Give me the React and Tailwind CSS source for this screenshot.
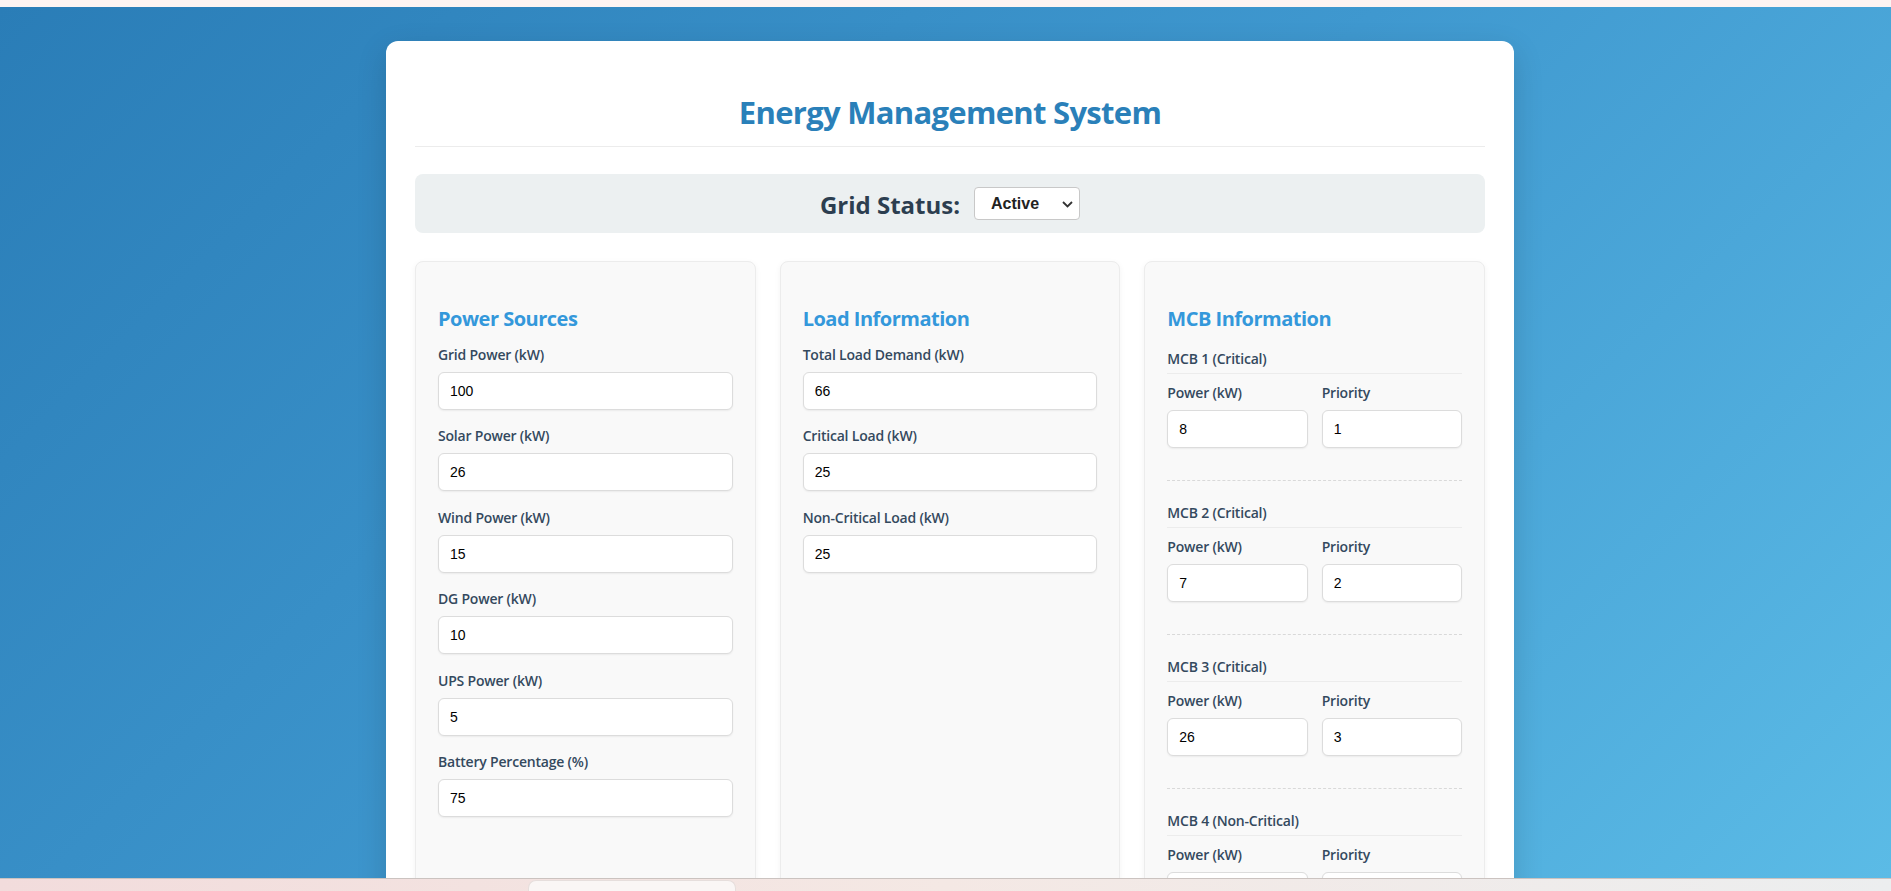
import { useState } from 'react';

const sources = [
  { label: 'Grid Power (kW)', value: '100' },
  { label: 'Solar Power (kW)', value: '26' },
  { label: 'Wind Power (kW)', value: '15' },
  { label: 'DG Power (kW)', value: '10' },
  { label: 'UPS Power (kW)', value: '5' },
  { label: 'Battery Percentage (%)', value: '75' },
];

const loads = [
  { label: 'Total Load Demand (kW)', value: '66' },
  { label: 'Critical Load (kW)', value: '25' },
  { label: 'Non-Critical Load (kW)', value: '25' },
];

const mcbs = [
  { name: 'MCB 1 (Critical)', power: '8', priority: '1' },
  { name: 'MCB 2 (Critical)', power: '7', priority: '2' },
  { name: 'MCB 3 (Critical)', power: '26', priority: '3' },
  { name: 'MCB 4 (Non-Critical)', power: '4', priority: '4' },
];

const inputCls =
  'w-full h-[38px] bg-white border border-[#dcdcdc] rounded-[6px] px-[11px] text-[14px] text-black font-["Liberation_Sans",Arial,sans-serif] shadow-[0_1px_2px_rgba(0,0,0,0.06)] focus:outline-none';

const labelCls = 'block text-[14px] leading-[20px] font-semibold tracking-[-0.2px] text-[#34495e] mb-[7px]';

const Field = ({ label, value, onChange }) => (
  <div className="mb-[16.5px]">
    <label className={labelCls}>{label}</label>
    <input type="number" className={inputCls} value={value} onChange={onChange} />
  </div>
);

const Panel = ({ title, children }) => (
  <div className="bg-[#f9f9f9] border border-[#ececec] rounded-[8px] shadow-[0_2px_6px_rgba(0,0,0,0.05)] px-[22px] pt-[43px] pb-6">
    <h2 className="text-[20px] leading-[28px] font-bold tracking-[-0.5px] text-[#3498db] mb-[11.5px]">{title}</h2>
    {children}
  </div>
);

export default function App() {
  const [gridStatus, setGridStatus] = useState('active');
  const [src, setSrc] = useState(sources.map((s) => s.value));
  const [load, setLoad] = useState(loads.map((l) => l.value));
  const [mcb, setMcb] = useState(mcbs);

  const updateMcb = (i, key, v) => {
    setMcb(mcb.map((m, idx) => (idx === i ? { ...m, [key]: v } : m)));
  };

  return (
    <div className="h-screen flex flex-col overflow-hidden font-['Open_Sans','Noto_Sans',sans-serif]">
      {/* browser strip */}
      <div className="h-[7px] bg-[#fdf4f2] shrink-0"></div>

      <div className="flex-1 overflow-hidden bg-[linear-gradient(135deg,#2a7db7_0%,#3f98cf_50%,#5bbbe6_100%)] flex justify-center pl-[9px] pt-[34px]">
        <div className="w-[1128px] shrink-0 self-start bg-white rounded-[12px] shadow-[0_10px_30px_rgba(0,0,0,0.15)] px-[29px] pt-[51px] pb-8">
          {/* Header */}
          <h1 className="text-center text-[31px] leading-[40px] font-bold tracking-[-0.7px] text-[#2a80b9] pb-[14px] border-b border-[#ececec]">
            Energy Management System
          </h1>

          {/* Grid status */}
          <div className="mt-[27px] h-[59px] bg-[#ecf0f1] rounded-[8px] flex items-center justify-center gap-[14px]">
            <span className="text-[24px] font-bold text-[#2c3e50] mt-[3px]">Grid Status:</span>
            <div className="relative">
              <select
                value={gridStatus}
                onChange={(e) => setGridStatus(e.target.value)}
                className="appearance-none w-[106px] h-[33px] bg-white border border-[#c8c8c8] rounded-[4px] pl-[16px] pr-8 text-[16px] font-bold text-[#222] font-['Liberation_Sans',Arial,sans-serif] focus:outline-none"
              >
                <option value="active">Active</option>
                <option value="inactive">Inactive</option>
              </select>
              <svg className="absolute right-[7px] top-[14px] pointer-events-none" width="11" height="7" viewBox="0 0 11 7" fill="none">
                <path d="M1 1l4.5 4.5L10 1" stroke="#333" strokeWidth="1.8" />
              </svg>
            </div>
          </div>

          {/* Panels */}
          <div className="mt-[28px] grid grid-cols-3 gap-[24px]">
            <Panel title="Power Sources">
              {sources.map((s, i) => (
                <Field
                  key={s.label}
                  label={s.label}
                  value={src[i]}
                  onChange={(e) => setSrc(src.map((v, idx) => (idx === i ? e.target.value : v)))}
                />
              ))}
            </Panel>

            <Panel title="Load Information">
              {loads.map((l, i) => (
                <Field
                  key={l.label}
                  label={l.label}
                  value={load[i]}
                  onChange={(e) => setLoad(load.map((v, idx) => (idx === i ? e.target.value : v)))}
                />
              ))}
            </Panel>

            <Panel title="MCB Information">
              <div className="pt-[4px]">
                {mcb.map((m, i) => (
                  <div key={m.name} className="border-b border-dashed border-[#d9d9d9] pb-[32px] mb-[22px]">
                    <div className="text-[14px] leading-[20px] font-semibold tracking-[-0.2px] text-[#34495e] pb-[4px] border-b border-[#ececec]">
                      {m.name}
                    </div>
                    <div className="mt-[9px] grid grid-cols-2 gap-[14px]">
                      <div>
                        <label className={labelCls}>Power (kW)</label>
                        <input type="number" className={inputCls} value={m.power} onChange={(e) => updateMcb(i, 'power', e.target.value)} />
                      </div>
                      <div>
                        <label className={labelCls}>Priority</label>
                        <input type="number" className={inputCls} value={m.priority} onChange={(e) => updateMcb(i, 'priority', e.target.value)} />
                      </div>
                    </div>
                  </div>
                ))}
              </div>
            </Panel>
          </div>
        </div>
      </div>

      {/* taskbar */}
      <div className="h-[13px] shrink-0 border-t border-[#cbc3c0] bg-[linear-gradient(90deg,#f2dcdc_0%,#f4e8e4_50%,#eceeef_100%)] flex items-start pl-[528px]">
        <div className="w-[208px] h-[12px] mt-[1px] bg-[#faf6f5] rounded-t-[8px] border border-[#e6dedc] border-b-0"></div>
      </div>
    </div>
  );
}
